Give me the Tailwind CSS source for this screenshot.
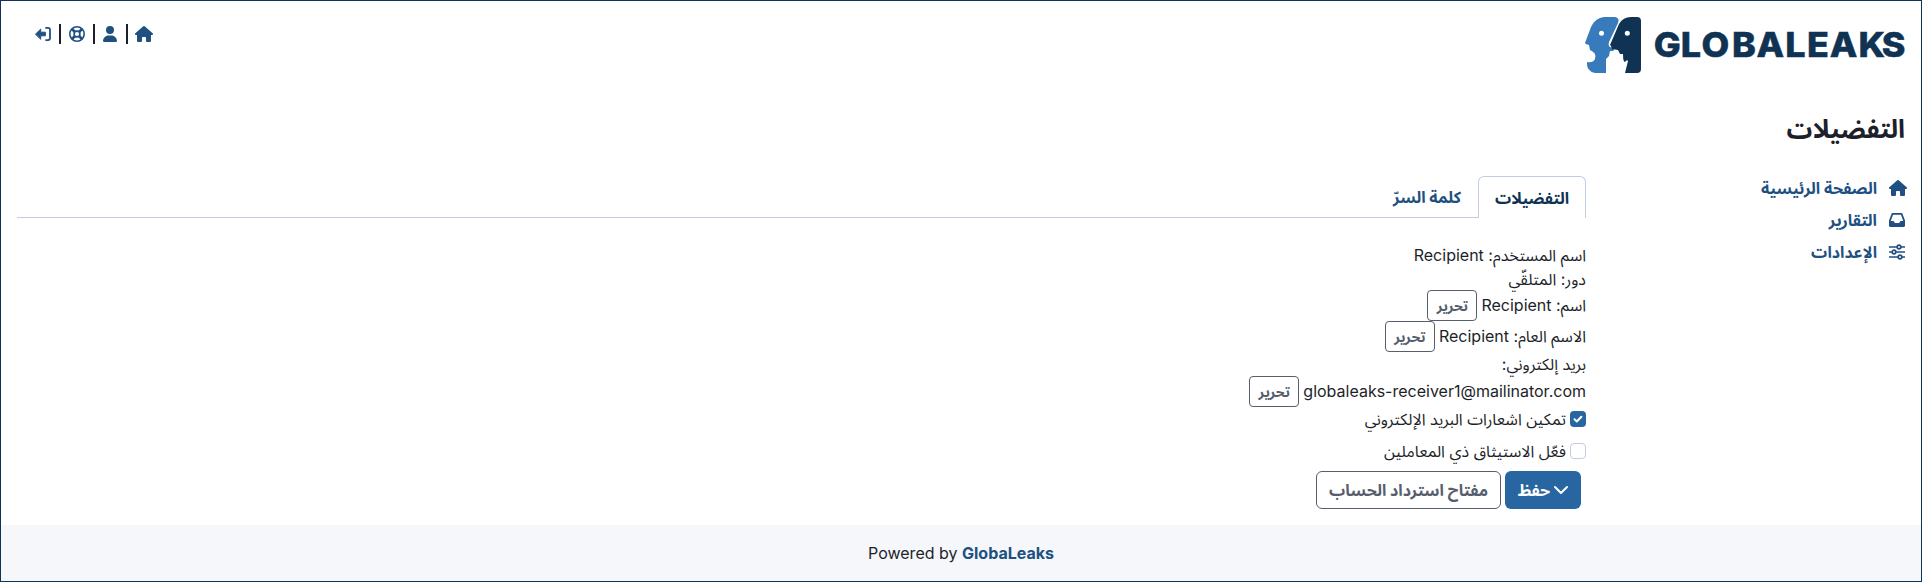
<!DOCTYPE html>
<html lang="ar" dir="rtl">
<head>
<meta charset="utf-8">
<title>GlobaLeaks</title>
<script src="https://cdn.jsdelivr.net/npm/@tailwindcss/browser@4"></script>
</head>
<body class="bg-white font-['Inter','Noto_Sans','Noto_Sans_Arabic',sans-serif] text-base leading-6 text-[#1d1f2a]">
<svg class="hidden">
  <symbol id="house" viewBox="0 0 576 512"><path d="M575.8 255.5c0 18-15 32.1-32 32.1h-32l.7 160.2c0 2.7-.2 5.4-.5 8.1V472c0 22.1-17.9 40-40 40H456c-1.1 0-2.2 0-3.3-.1c-1.4 .1-2.8 .1-4.2 .1H416 392c-22.1 0-40-17.9-40-40V448 384c0-17.7-14.3-32-32-32H256c-17.7 0-32 14.3-32 32v64 24c0 22.1-17.9 40-40 40H160 128.1c-1.5 0-3-.1-4.500-.2c-1.2 .1-2.4 .2-3.6 .2H104c-22.1 0-40-17.9-40-40V360c0-.9 0-1.9 .1-2.8V287.6H32c-18 0-32-14-32-32.1c0-9 3-17 10-24L266.4 8c7-7 15-8 22-8s15 2 21 7L564.8 231.5c8 7 12 15 11 24z"/></symbol>
</svg>
<div class="flex h-[582px] w-full flex-col border border-[#103253]">
  <header class="flex h-[104px] items-start justify-between pt-4 pr-[15px] pl-4">
    <svg class="h-14 w-[321px]" viewBox="1585 17 321 56" direction="ltr">
      <path fill="#377bbc" d="M1604 17h11q5 1 3 6l-9 19q-1 4 1 5l4 1q1 2-1 3l-3 0-1 5-3 3v14h-11q-9-2-8-11q6 1 8-3q2-6-5-9l-1-5q-4-1-4-2l6-16q4-9 13-10z"/>
      <path fill="#103253" d="M1631 17h6q4 0 4 4v48q0 4-4 4h-12l3-12q-1-2-3 1-2 0-2-8l-3 0-2-4-6-1-1-3-1-1 9-21q4-7 12-7z"/>
      <circle cx="1601.500" cy="33.300" r="2.500" fill="#fff"/><circle cx="1627.300" cy="33.300" r="2.500" fill="#fff"/>
      <text transform="translate(1585 0) scale(1.04 1)" y="57" x="66 92 112 141.300 165 192.500 213.500 235.300 263 285.300" fill="#103253" stroke="#103253" stroke-width=".5" font-family="Inter" font-weight="800" font-size="34.500">GLOBALEAKS</text>
    </svg>
    <nav class="mt-px flex h-8 items-center gap-2 pl-[18px] text-[#205081]">
      <svg class="-ml-px h-4 w-[18px]" fill="currentColor"><use href="#house"/></svg>
      <i class="h-5 w-0.5 bg-[#1d1f2a]"></i>
      <svg class="h-4 w-[15px]" viewBox="0 0 480 512" fill="currentColor"><path d="M224 256A128 128 0 1 0 224 0a128 128 0 1 0 0 256zm-45.700 48C79.800 304 0 383.800 0 482.300C0 498.700 13.300 512 29.700 512H418.300c16.400 0 29.700-13.300 29.700-29.700C448 383.800 368.200 304 269.700 304H178.300z"/></svg>
      <i class="h-5 w-0.5 bg-[#1d1f2a]"></i>
      <svg class="h-4 w-4" viewBox="0 0 16 16" fill="none" stroke="currentColor"><circle cx="8" cy="8" r="7.200" stroke-width="1.600"/><circle cx="8" cy="8" r="2.900" stroke-width="1.600"/><path stroke-width="2.600" d="M3 3l3 3M13 3l-3 3M3 13l3-3M13 13l-3-3"/></svg>
      <i class="h-5 w-0.5 bg-[#1d1f2a]"></i>
      <svg class="h-4 w-4" viewBox="0 0 16 16" fill="none" stroke="currentColor" stroke-width="1.800" stroke-linecap="round"><path d="M11 1.900h2a2 2 0 0 1 2 2v8.200a2 2 0 0 1-2 2h-2"/><path fill="currentColor" stroke-width="1" stroke-linejoin="round" d="M.7 8l5-4.900v3.100h4.700v3.600H5.700v3.100z"/></svg>
    </nav>
  </header>
  <h1 class="flex h-[50px] items-center px-4 pb-[3px] text-[25.600px] font-bold">التفضيلات</h1>
  <main class="flex h-[370px] px-4">
    <aside class="w-[319px] shrink-0 pt-[17px] font-bold text-[#205081]">
      <a class="flex h-8 items-center gap-3"><svg class="-mr-0.5 h-4 w-[18px]" fill="currentColor"><use href="#house"/></svg>الصفحة الرئيسية</a>
      <a class="flex h-8 items-center gap-3"><svg class="h-4 w-4" viewBox="0 0 16 16" fill="none" stroke="currentColor" stroke-width="1.800" stroke-linejoin="round"><path d="M3.500 1.800h9L15.200 9v4.200a1 1 0 0 1-1 1H1.800a1 1 0 0 1-1-1V9z"/><path fill="currentColor" stroke-width="1" d="M1 9.500h3.500l1.200 2h4.600l1.200-2H15v4H1z"/></svg>التقارير</a>
      <a class="flex h-8 items-center gap-3"><svg class="h-4 w-4" viewBox="0 0 16 16" fill="none" stroke="currentColor" stroke-width="1.700"><path d="M0 3h8M12 3h4M0 8h3M7 8h9M0 13h9M13 13h3"/><circle cx="10" cy="3" r="1.800"/><circle cx="5" cy="8" r="1.800"/><circle cx="11" cy="13" r="1.800"/></svg>الإعدادات</a>
    </aside>
    <section class="flex-1">
      <div class="mt-[21px] flex h-[42px] border-b border-[#c3cde0] font-bold">
        <div class="flex h-[42px] w-[108px] items-center justify-center rounded-t-md border border-b-0 border-[#c3cde0] bg-white text-[#103253]">التفضيلات</div>
        <div class="flex items-center px-[17px] text-[#205081]">كلمة السرّ</div>
      </div>
      <div class="pt-[25px]">
        <div class="h-6">اسم المستخدم: Recipient</div>
        <div class="h-[23px]">دور: المتلقّي</div>
        <div class="flex h-[31px] items-center gap-1"><span class="mb-0.5">اسم: Recipient</span><button class="h-[31px] w-[50px] rounded border border-[#565e6d] text-sm font-bold text-[#565e6d]">تحرير</button></div>
        <div class="flex h-[31px] items-center gap-1"><span class="mb-0.5">الاسم العام: Recipient</span><button class="h-[31px] w-[50px] rounded border border-[#565e6d] text-sm font-bold text-[#565e6d]">تحرير</button></div>
        <div class="h-6">بريد إلكتروني:</div>
        <div class="flex h-[31px] items-center gap-1"><span class="mb-0.5">globaleaks-receiver1@mailinator.com</span><button class="h-[31px] w-[50px] rounded border border-[#565e6d] text-sm font-bold text-[#565e6d]">تحرير</button></div>
        <div class="flex h-6 items-center gap-1"><span class="flex size-4 items-center justify-center rounded bg-[#2866a2]"><svg class="size-3" viewBox="0 0 12 12" fill="none" stroke="#fff" stroke-width="2" stroke-linecap="round" stroke-linejoin="round"><path d="M2.500 6.300l2.300 2.200 4.600-4.700"/></svg></span>تمكين اشعارات البريد الإلكتروني</div>
        <div class="flex h-10 items-center gap-1"><span class="size-4 rounded border border-[#c3cde0]"></span>فعّل الاستيثاق ذي المعاملين</div>
        <div class="flex gap-1 pr-[5px] font-bold">
          <button class="flex h-[38px] w-[76px] items-center justify-center gap-1 rounded-md bg-[#2866a2] text-white"><svg class="h-4 w-3.5" viewBox="0 0 14 16" fill="none" stroke="currentColor" stroke-width="2" stroke-linecap="round" stroke-linejoin="round"><path d="M1 5l6 6 6-6"/></svg>حفظ</button>
          <button class="h-[38px] w-[185px] rounded-md border border-[#565e6d] text-[#565e6d]">مفتاح استرداد الحساب</button>
        </div>
      </div>
    </section>
  </main>
  <footer class="flex flex-1 items-center justify-center bg-[#f5f7fb]" dir="ltr"><span>Powered by <b class="text-[#205081]">GlobaLeaks</b></span></footer>
</div>
</body>
</html>
